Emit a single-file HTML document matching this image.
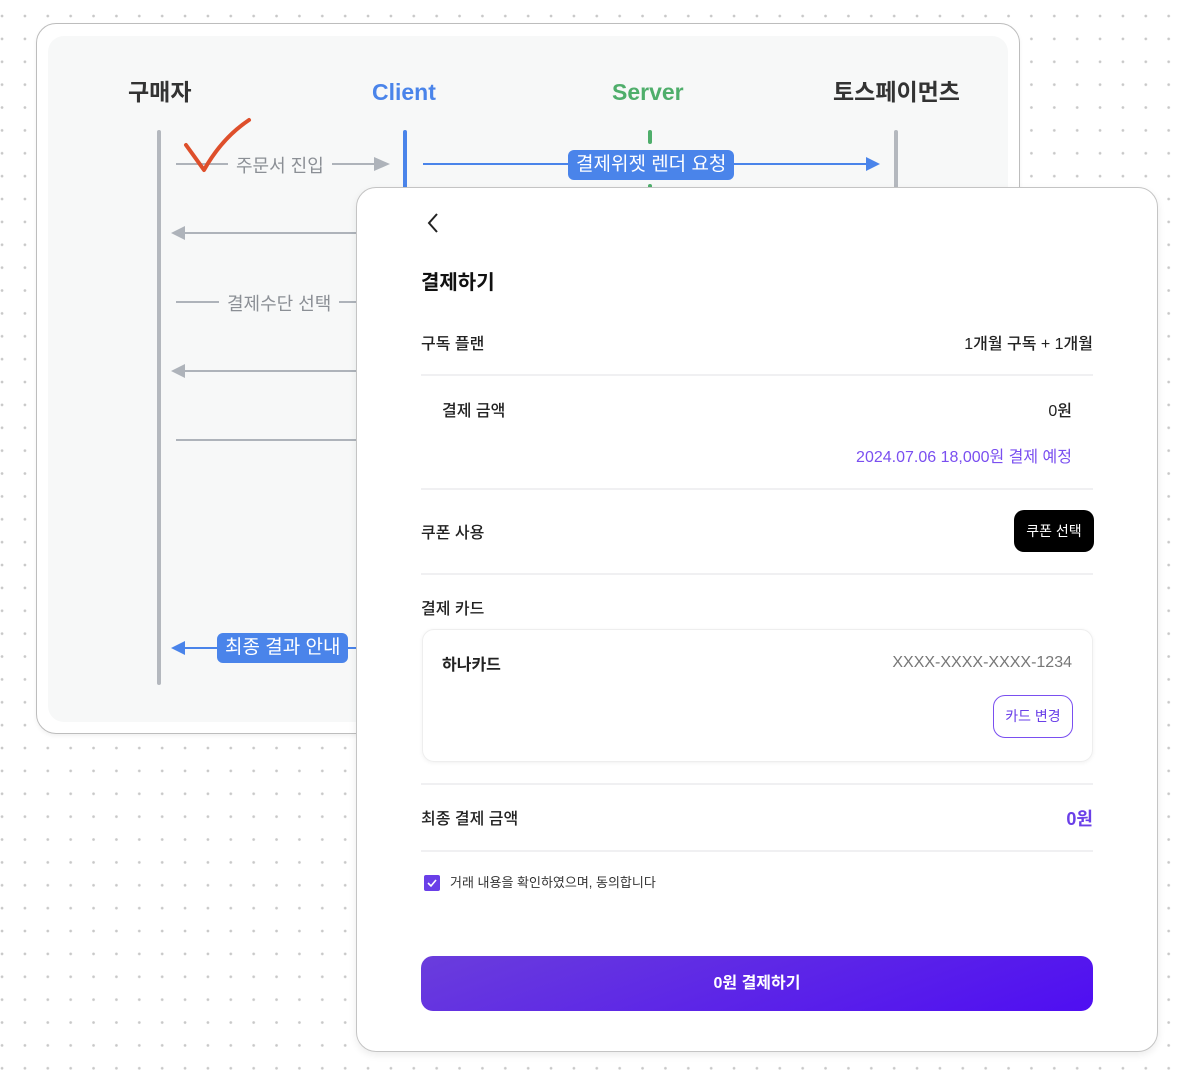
<!DOCTYPE html>
<html><head><meta charset="utf-8">
<style>
*{box-sizing:border-box;margin:0;padding:0}
body{width:1178px;height:1070px;position:relative;overflow:hidden;background:#fff;
background-image:radial-gradient(circle,#c8c8c8 1.1px,transparent 1.6px);background-size:22.875px 22.875px;background-position:-9.4px 4.6px;
font-family:"Liberation Sans","Noto Sans CJK KR",sans-serif;}
.a{position:absolute}
.back{left:36px;top:23px;width:984px;height:711px;border:1.5px solid #bdbdbd;border-radius:20px;background:#fff;box-shadow:0 2px 4px rgba(0,0,0,.06)}
.inner{left:48px;top:36px;width:960px;height:686px;background:#f7f8f8;border-radius:16px}
.hd{font-size:23px;font-weight:700;top:73px}
.hl{top:79px}
.vl{width:4px;border-radius:2px}
.lbl{font-size:18px;color:#8b8f95;background:#f7f8f8}
.pill{background:#4a84ea;color:#fff;font-size:19px;border-radius:6px;padding:2px 8px;line-height:26px}
.front{left:356px;top:187px;width:802px;height:865px;background:#fff;border:1.5px solid #c4c4c4;border-radius:20px;box-shadow:0 3px 8px rgba(0,0,0,.08)}
.t{font-size:16px;color:#222;font-weight:500}
.hr{height:1.5px;background:#f0f0f2;left:421px;width:672px}
</style></head><body>
<div class="a back"></div>
<div class="a inner"></div>
<div class="a hd" style="left:128px;color:#333">구매자</div>
<div class="a hd hl" style="left:372px;color:#4a84ea">Client</div>
<div class="a hd hl" style="left:612px;color:#4fae6b">Server</div>
<div class="a hd" style="left:833px;color:#333">토스페이먼츠</div>
<div class="a vl" style="left:157px;top:130px;height:555px;background:#b4b8be"></div>
<div class="a vl" style="left:403px;top:130px;height:60px;background:#4a84ea"></div>
<div class="a vl" style="left:648px;top:130px;height:14px;background:#4fae6b"></div>
<div class="a vl" style="left:648px;top:184px;height:6px;background:#4fae6b"></div>
<div class="a vl" style="left:894px;top:130px;height:60px;background:#b4b8be"></div>
<!-- row1 -->
<div class="a" style="left:176px;top:163px;width:200px;height:2px;background:#aeb3ba"></div>
<svg class="a" style="left:374px;top:157px" width="16" height="14"><path d="M0 0L16 7L0 14Z" fill="#aeb3ba"/></svg>
<div class="a lbl" style="left:228px;top:152px;padding:0 8px">주문서 진입</div>
<div class="a" style="left:423px;top:163px;width:450px;height:2px;background:#4a84ea"></div>
<svg class="a" style="left:866px;top:157px" width="14" height="14"><path d="M0 0L14 7L0 14Z" fill="#4a84ea"/></svg>
<div class="a pill" style="left:568px;top:150px">결제위젯 렌더 요청</div>
<svg class="a" style="left:180px;top:114px" width="75" height="62"><path d="M6 31 Q14 42 24 56 Q42 24 69 6" stroke="#de4f2b" stroke-width="4" fill="none" stroke-linecap="round" stroke-linejoin="round"/></svg>
<!-- row2 -->
<div class="a" style="left:180px;top:232px;width:180px;height:2px;background:#aeb3ba"></div>
<svg class="a" style="left:171px;top:226px" width="14" height="14"><path d="M14 0L0 7L14 14Z" fill="#aeb3ba"/></svg>
<div class="a" style="left:176px;top:301px;width:180px;height:2px;background:#aeb3ba"></div>
<div class="a lbl" style="left:219px;top:290px;padding:0 8px">결제수단 선택</div>
<div class="a" style="left:180px;top:370px;width:180px;height:2px;background:#aeb3ba"></div>
<svg class="a" style="left:171px;top:364px" width="14" height="14"><path d="M14 0L0 7L14 14Z" fill="#aeb3ba"/></svg>
<div class="a" style="left:176px;top:439px;width:180px;height:2px;background:#aeb3ba"></div>
<div class="a" style="left:180px;top:647px;width:180px;height:2px;background:#4a84ea"></div>
<svg class="a" style="left:171px;top:641px" width="14" height="14"><path d="M14 0L0 7L14 14Z" fill="#4a84ea"/></svg>
<div class="a pill" style="left:217px;top:633px">최종 결과 안내</div>

<div class="a front"></div>
<svg class="a" style="left:425px;top:212px" width="16" height="22"><path d="M12 2L4 11L12 20" stroke="#222" stroke-width="2" fill="none"/></svg>
<div class="a" style="left:421px;top:266px;font-size:20px;font-weight:700;color:#111">결제하기</div>
<div class="a t" style="left:421px;top:330px">구독 플랜</div>
<div class="a t" style="right:85px;top:330px">1개월 구독 + 1개월</div>
<div class="a hr" style="top:374px"></div>
<div class="a t" style="left:442px;top:397px">결제 금액</div>
<div class="a t" style="right:106px;top:397px">0원</div>
<div class="a t" style="right:106px;top:443px;color:#7a4ff0;font-weight:400">2024.07.06 18,000원 결제 예정</div>
<div class="a hr" style="top:488px"></div>
<div class="a t" style="left:421px;top:519px">쿠폰 사용</div>
<div class="a" style="left:1014px;top:510px;width:80px;height:42px;background:#000;color:#fff;border-radius:10px;font-size:14px;text-align:center;line-height:42px">쿠폰 선택</div>
<div class="a hr" style="top:573px"></div>
<div class="a t" style="left:421px;top:595px">결제 카드</div>
<div class="a" style="left:422px;top:629px;width:671px;height:133px;border:1px solid #eee;border-radius:12px;box-shadow:0 1px 4px rgba(0,0,0,.06)"></div>
<div class="a t" style="left:442px;top:651px;font-weight:700">하나카드</div>
<div class="a" style="right:106px;top:654px;font-size:16px;color:#777">XXXX-XXXX-XXXX-1234</div>
<div class="a" style="left:993px;top:695px;width:80px;height:43px;border:1.5px solid #7a4ff0;border-radius:12px;color:#6a3fe8;font-size:14px;text-align:center;line-height:40px">카드 변경</div>
<div class="a hr" style="top:783px"></div>
<div class="a t" style="left:421px;top:805px">최종 결제 금액</div>
<div class="a" style="right:85px;top:805px;font-size:18px;font-weight:700;color:#6a3fe8">0원</div>
<div class="a hr" style="top:850px"></div>
<div class="a" style="left:424px;top:875px;width:16px;height:16px;background:#6a3fe8;border-radius:2px"></div>
<svg class="a" style="left:424px;top:875px" width="16" height="16"><path d="M4 8L7 11L12 5" stroke="#fff" stroke-width="1.6" fill="none"/></svg>
<div class="a" style="left:450px;top:872px;font-size:13px;color:#333">거래 내용을 확인하였으며, 동의합니다</div>
<div class="a" style="left:421px;top:956px;width:672px;height:55px;border-radius:12px;background:linear-gradient(160deg,#6a3ddc,#4f0ef2);color:#fff;font-size:16px;font-weight:700;text-align:center;line-height:55px">0원 결제하기</div>
</body></html>
